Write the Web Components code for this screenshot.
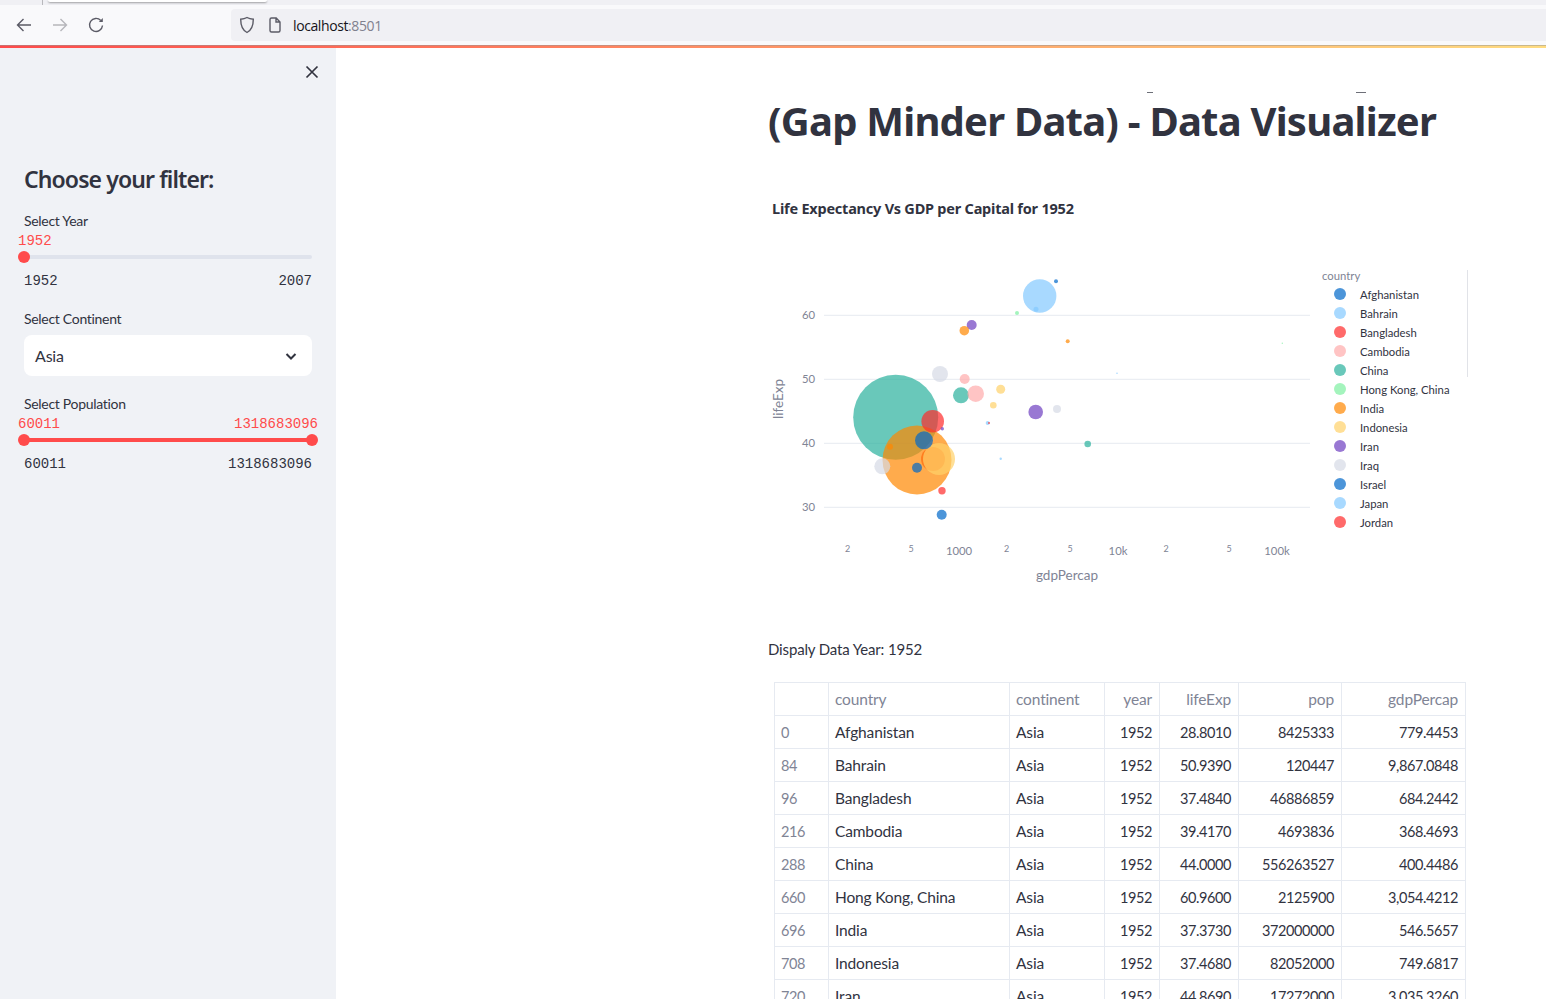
<!DOCTYPE html>
<html>
<head>
<meta charset="utf-8">
<title>Gap Minder Data Visualizer</title>
<style>
  html, body { margin: 0; height: 999px; overflow: hidden; background: #fff; }
  body { display: flex; flex-direction: column; font-family: "Lato", "Liberation Sans", sans-serif; color: #31333f; }
  .shell { display: flex; flex: 1; min-height: 0; }
</style>
</head>
<body>
<browser-bar address="localhost" port=":8501"></browser-bar>
<div class="shell">
  <side-panel>
    <filter-slider label="Select Year" min="1952" max="2007" low="1952"></filter-slider>
    <filter-select label="Select Continent" value="Asia"></filter-select>
    <filter-slider label="Select Population" min="60011" max="1318683096" low="60011" high="1318683096"></filter-slider>
  </side-panel>
  <app-main>
    <bubble-chart></bubble-chart>
    <data-table></data-table>
  </app-main>
</div>

<script>
class BrowserBar extends HTMLElement {
    connectedCallback() {
        const address = this.getAttribute('address');
        const port = this.getAttribute('port');
        this.attachShadow({ mode: 'open' });
        this.shadowRoot.innerHTML = `
          <style>
            :host { display: block; flex: none; font-family: "Open Sans", "Liberation Sans", sans-serif; }
            .tabs { height: 5px; background: #f0f0f4; display: flex; position: relative; overflow: hidden; }
            .sep { width: 1px; height: 5px; background: #b8b8bc; margin-left: 42px; }
            .tab { width: 219px; height: 2px; margin-left: 5px; background: #fff; border-radius: 0 0 4px 4px; box-shadow: 0 1px 2px rgba(0,0,0,.35); }
            .bar { height: 40px; background: #f9f9fb; display: flex; align-items: center; }
            .nav { display: flex; gap: 16px; padding-left: 14px; width: 231px; flex: none; box-sizing: border-box; }
            .nav svg { display: block; }
            .url { flex: 1; height: 32px; background: #f0f0f4; border-radius: 4px 0 0 4px; display: flex; align-items: center; padding-left: 8px; gap: 13px; font-size: 14px; letter-spacing: -.4px; color: #15141a; }
            .url span span { color: #80808e; }
            .line { height: 2px; background: linear-gradient(90deg, #ff4b4b, #ffdc80); border-top: 1px solid rgba(150,150,150,.5); }
          </style>
          <div class="tabs"><div class="sep"></div><div class="tab"></div></div>
          <div class="bar">
            <div class="nav">
              <svg width="20" height="20" viewBox="0 0 20 20" fill="none" stroke="#5b5b66" stroke-width="1.4"><path d="M17 10H4M9.500 4 3.500 10l6 6"/></svg>
              <svg width="20" height="20" viewBox="0 0 20 20" fill="none" stroke="#b6b6bb" stroke-width="1.4"><path d="M3 10h13M10.500 4l6 6-6 6"/></svg>
              <svg width="20" height="20" viewBox="0 0 20 20" fill="none" stroke="#5b5b66" stroke-width="1.4"><path d="M16.500 10.500a6.500 6.500 0 1 1-1.700-5"/><path d="M16.800 3v4h-4" fill="#5b5b66" stroke="none"/></svg>
            </div>
            <div class="url">
              <svg width="16" height="18" viewBox="0 0 16 18" fill="none" stroke="#5b5b66" stroke-width="1.4"><path d="M8 1.500c2 1.200 4 1.600 6.300 1.700 0 6-1 10.500-6.300 13.300C2.700 13.700 1.700 9.200 1.700 3.200 4 3.100 6 2.700 8 1.500z"/></svg>
              <svg width="14" height="16" viewBox="0 0 14 16" fill="none" stroke="#5b5b66" stroke-width="1.4"><path d="M2 2.500A1.500 1.500 0 0 1 3.500 1h4.700L12 5v8.500a1.500 1.500 0 0 1-1.500 1.500h-7A1.500 1.500 0 0 1 2 13.500zM8 1v4h4"/></svg>
              <span style="margin-left:-2px">${address}<span>${port}</span></span>
            </div>
          </div>
          <div class="line"></div>`;
    }
}

class SidePanel extends HTMLElement {
    constructor() {
        super();
        this.attachShadow({ mode: 'open' });
        this.shadowRoot.innerHTML = `
          <style>
            :host { display: block; width: 336px; flex: none; background: #f0f2f6; box-sizing: border-box; padding: 0 24px; }
            .close { display: flex; justify-content: flex-end; padding: 17px 0 0; height: 47px; margin-right: -7px; box-sizing: border-box; }
            h2 { margin: 68px 0 0; font-size: 23px; line-height: 32px; font-weight: 600; font-family: "Noto Sans", sans-serif; letter-spacing: -.9px; color: #31333f; }
            .items { display: flex; flex-direction: column; margin-top: 16px; }
          </style>
          <div class="close">
            <svg width="14" height="14" viewBox="0 0 14 14" stroke="#31333f" stroke-width="1.700" fill="none"><path d="M1.500 1.500l11 11M12.500 1.500l-11 11"/></svg>
          </div>
          <h2>Choose your filter:</h2>
          <div class="items"><slot></slot></div>`;
    }
}

class FilterSlider extends HTMLElement {
    connectedCallback() {
        const label = this.getAttribute('label');
        const min = this.getAttribute('min');
        const max = this.getAttribute('max');
        const low = this.getAttribute('low');
        const high = this.getAttribute('high');
        this.attachShadow({ mode: 'open' });
        this.shadowRoot.innerHTML = `
          <style>
            :host { display: block; height: 85px; margin-bottom: 13px; }
            .label { font-size: 14px; line-height: 20px; letter-spacing: -.3px; color: #31333f; height: 20px; }
            .vals { display: flex; justify-content: space-between; margin: 0 -6px; height: 18px; padding-top: 1px; box-sizing: border-box; font: 14px/18px "Liberation Mono", monospace; color: #ff4b4b; }
            .track { height: 4px; margin-top: 6px; border-radius: 2px; position: relative; background: ${high ? '#ff4b4b' : '#dfe3ec'}; }
            .thumb { position: absolute; top: -4px; width: 12px; height: 12px; border-radius: 50%; background: #ff4b4b; }
            .ticks { display: flex; justify-content: space-between; margin-top: 13px; font: 14px/18px "Liberation Mono", monospace; color: #31333f; }
          </style>
          <div class="label">${label}</div>
          <div class="vals"><span>${low}</span><span>${high || ''}</span></div>
          <div class="track">
            <div class="thumb" style="left:-6px"></div>
            ${high ? '<div class="thumb" style="right:-6px"></div>' : ''}
          </div>
          <div class="ticks"><span>${min}</span><span>${max}</span></div>`;
    }
}

class FilterSelect extends HTMLElement {
    connectedCallback() {
        this.attachShadow({ mode: 'open' });
        this.shadowRoot.innerHTML = `
          <style>
            :host { display: block; height: 72px; margin-bottom: 13px; }
            .label { font-size: 14px; line-height: 20px; letter-spacing: -.3px; height: 20px; margin-bottom: 6px; color: #31333f; }
            .box { height: 41px; background: #fff; border-radius: 8px; display: flex; align-items: center; justify-content: space-between; padding: 0 14px 0 11px; font-size: 16px; letter-spacing: -.2px; }
          </style>
          <div class="label">${this.getAttribute('label')}</div>
          <div class="box">
            <span>${this.getAttribute('value')}</span>
            <svg width="14" height="14" viewBox="0 0 14 14" fill="none" stroke="#31333f" stroke-width="2"><path d="M2.500 5 7 9.500 11.500 5"/></svg>
          </div>`;
    }
}

class AppMain extends HTMLElement {
    constructor() {
        super();
        this.attachShadow({ mode: 'open' });
        this.shadowRoot.innerHTML = `
          <style>
            :host { display: block; flex: 1; min-width: 0; position: relative; overflow: hidden; padding-left: 432px; box-sizing: border-box; }
            .stray { position: absolute; top: 44px; height: 1px; background: #6d6f78; }
            h1 { margin: 46px 0 0; font-family: "Noto Sans", sans-serif; font-size: 40px; line-height: 54px; font-weight: 700; letter-spacing: -.78px; color: #31333f; white-space: nowrap; }
            h5 { margin: 49px 0 0 4px; font-family: "Noto Sans", sans-serif; font-size: 14.500px; line-height: 22px; font-weight: 700; letter-spacing: -.22px; color: #31333f; }
            .chart { margin: 31px 0 0 0; }
          </style>
          <div class="stray" style="left:811px;width:6px;"></div>
          <div class="stray" style="left:1020px;width:10px;"></div>
          <h1>(Gap Minder Data) - Data Visualizer</h1>
          <h5>Life Expectancy Vs GDP per Capital for 1952</h5>
          <div class="chart"><slot></slot></div>`;
    }
}

const PALETTE = {
    blue: '#0068c9', sky: '#83c9ff', red: '#ff2b2b', pink: '#ffabab', teal: '#29b09d',
    green: '#7defa1', orange: '#ff8700', yellow: '#ffd16a', purple: '#6d3fc0', grey: '#d5dae5'
};

// cx, cy, r, colour: read off the reference, in its draw order (the red disc sits under India)
const BUBBLES = [
    [933, 459, 12, 'red'], [895.7, 417.3, 42.5, 'teal'], [917, 460, 34.5, 'orange'], [1039.7, 296, 16.7, 'sky'],
    [939, 459, 16, 'yellow'], [932.7, 421.3, 11.3, 'red'],
    [924, 440.3, 9, 'blue'], [882.3, 466.3, 8, 'grey'], [917, 467.7, 5, 'blue'],
    [890, 446.7, 3, 'orange'], [942, 490.7, 3.7, 'red'], [941.7, 514.7, 5, 'blue'],
    [942.3, 428.700, 1.7, 'purple'], [987.7, 423, 2, 'sky'], [989, 423, 1, 'red'],
    [940, 374, 8, 'grey'], [964.7, 379, 5, 'pink'], [961, 395.3, 8, 'teal'],
    [975.7, 393.7, 8.3, 'pink'], [1000.7, 389.3, 4.5, 'yellow'], [993.3, 405.3, 3.3, 'yellow'],
    [1035.7, 412, 7.3, 'purple'], [1057, 409, 4, 'grey'], [1087.7, 444, 3.3, 'teal'],
    [1000.7, 458.7, 1.2, 'sky'], [1117, 373.3, .8, 'sky'], [1056, 281.3, 2, 'blue'],
    [1036, 309.3, 2.5, 'sky'], [1017, 313, 2, 'green'], [971.7, 325, 5, 'purple'],
    [964.3, 330.7, 4.8, 'orange'], [1067.7, 341.3, 2, 'orange'], [1282.3, 343.3, .7, 'green']
];

const LEGEND = [
    ['Afghanistan', 'blue'], ['Bahrain', 'sky'], ['Bangladesh', 'red'], ['Cambodia', 'pink'],
    ['China', 'teal'], ['Hong Kong, China', 'green'], ['India', 'orange'], ['Indonesia', 'yellow'],
    ['Iran', 'purple'], ['Iraq', 'grey'], ['Israel', 'blue'], ['Japan', 'sky'], ['Jordan', 'red']
];

class BubbleChart extends HTMLElement {
    constructor() {
        super();
        this.attachShadow({ mode: 'open' });
        // the svg origin sits at page (768, 250)
        const ox = 768, oy = 250;
        const grid = [[60, 315.3], [50, 379.3], [40, 443.3], [30, 507.3]].map(([v, y]) => `
            <line x1="${824 - ox}" x2="${1310 - ox}" y1="${y - oy}" y2="${y - oy}" stroke="#e6eaf1"/>
            <text x="${815 - ox}" y="${y - oy + 4}" text-anchor="end" class="tick">${v}</text>`).join('');
        const xticks = [[847.5, '2'], [911, '5'], [959, '1000'], [1006.5, '2'], [1070, '5'], [1118, '10k'], [1166, '2'], [1229, '5'], [1277, '100k']]
            .map(([x, t]) => `<text x="${x - ox}" y="${(t.length > 1 ? 555 : 552) - oy}" text-anchor="middle" class="${t.length > 1 ? 'tick' : 'minor'}">${t}</text>`).join('');
        const dots = BUBBLES.map(([x, y, r, c]) => `<circle cx="${x - ox}" cy="${y - oy}" r="${r}" fill="${PALETTE[c]}" fill-opacity=".7"/>`).join('');
        const legend = LEGEND.map(([name, c], i) => `
            <circle cx="${1340 - ox}" cy="${294 + i * 19 - oy}" r="6" fill="${PALETTE[c]}" fill-opacity=".7"/>
            <text x="${1360 - ox}" y="${299 + i * 19 - oy}" class="leg">${name}</text>`).join('');
        this.shadowRoot.innerHTML = `
          <style>
            :host { display: block; }
            svg { display: block; font-family: "Lato", "Liberation Sans", sans-serif; }
            p { margin: 48px 0 0; font-size: 15px; line-height: 22px; letter-spacing: -.15px; color: #31333f; }
            .tick { font-size: 11.300px; fill: #808495; }
            .minor { font-size: 9px; fill: #808495; }
            .title { font-size: 13.500px; fill: #808495; }
            .leghead { font-size: 11.300px; fill: #808495; }
            .leg { font-size: 11.300px; fill: #31333f; }
          </style>
          <svg width="710" height="340" viewBox="0 0 710 340">
            ${grid}${xticks}${dots}
            <text x="${1067 - ox}" y="${580 - oy}" text-anchor="middle" class="title">gdpPercap</text>
            <text transform="translate(${783 - ox} ${399 - oy}) rotate(-90)" text-anchor="middle" class="title">lifeExp</text>
            <text x="${1322 - ox}" y="${280 - oy}" class="leghead">country</text>
            ${legend}
            <rect x="${1467 - ox}" y="${270 - oy}" width="1" height="107" fill="#e1e3e8"/>
          </svg>
          <p>Dispaly Data Year: 1952</p>`;
    }
}

const ROWS = [
    ['0', 'Afghanistan', 'Asia', '1952', '28.8010', '8425333', '779.4453'],
    ['84', 'Bahrain', 'Asia', '1952', '50.9390', '120447', '9,867.0848'],
    ['96', 'Bangladesh', 'Asia', '1952', '37.4840', '46886859', '684.2442'],
    ['216', 'Cambodia', 'Asia', '1952', '39.4170', '4693836', '368.4693'],
    ['288', 'China', 'Asia', '1952', '44.0000', '556263527', '400.4486'],
    ['660', 'Hong Kong, China', 'Asia', '1952', '60.9600', '2125900', '3,054.4212'],
    ['696', 'India', 'Asia', '1952', '37.3730', '372000000', '546.5657'],
    ['708', 'Indonesia', 'Asia', '1952', '37.4680', '82052000', '749.6817'],
    ['720', 'Iran', 'Asia', '1952', '44.8690', '17272000', '3,035.3260']
];

class DataTable extends HTMLElement {
    constructor() {
        super();
        this.attachShadow({ mode: 'open' });
        const head = ['', 'country', 'continent', 'year', 'lifeExp', 'pop', 'gdpPercap'];
        const cells = (row, tag) => row.map((v, i) => `<${tag} class="c${i}">${v}</${tag}>`).join('');
        this.shadowRoot.innerHTML = `
          <style>
            :host { display: block; margin: 22px 0 0 6px; }
            table { border-collapse: collapse; table-layout: fixed; width: 691px; font-size: 15.500px; letter-spacing: -.15px; color: #31333f; }
            th, td { height: 33px; padding: 0 7px 0 6px; border: 1px solid #e6eaf1; font-weight: 400; text-align: right; white-space: nowrap; box-sizing: border-box; }
            th { color: #808495; }
            td.c0, td.c3, td.c4, td.c5, td.c6 { font-size: 14.500px; letter-spacing: -.4px; }
            .c0 { color: #808495; text-align: left; width: 54px; }
            .c1 { text-align: left; width: 181px; }
            .c2 { text-align: left; width: 95px; }
            .c3 { width: 55px; }
            .c4 { width: 79px; }
            .c5 { width: 103px; }
            .c6 { width: 124px; }
          </style>
          <table>
            <thead><tr>${cells(head, 'th')}</tr></thead>
            <tbody>${ROWS.map(r => `<tr>${cells(r, 'td')}</tr>`).join('')}</tbody>
          </table>`;
    }
}

window.customElements.define('browser-bar', BrowserBar);
window.customElements.define('side-panel', SidePanel);
window.customElements.define('filter-slider', FilterSlider);
window.customElements.define('filter-select', FilterSelect);
window.customElements.define('app-main', AppMain);
window.customElements.define('bubble-chart', BubbleChart);
window.customElements.define('data-table', DataTable);
</script>
</body>
</html>
